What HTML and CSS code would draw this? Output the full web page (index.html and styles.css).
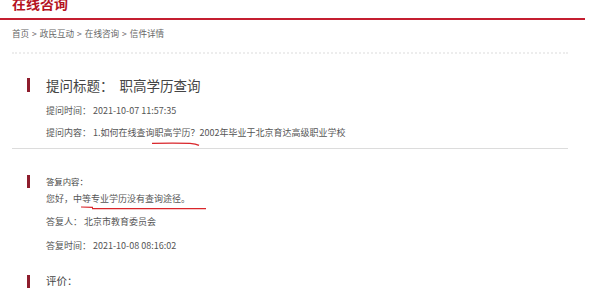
FILE: index.html
```html
<!DOCTYPE html>
<html>
<head>
	<meta charset="UTF-8">
	<title>在线咨询</title>
	<link rel="stylesheet" href="styles.css">
</head>
<body>
	<div class="top">
		<h1>在线咨询</h1>
	</div>
	<div class="crumb">首页 &gt; 政民互动 &gt; 在线咨询 &gt; 信件详情</div>
	<div class="dots"></div>

	<div class="ask">
		<div class="head big"><span class="bar"></span>提问标题：&nbsp;职高学历查询</div>
		<div class="line l-time">提问时间：&nbsp;2021-10-07 11:57:35</div>
		<div class="line l-text">提问内容：&nbsp;1.如何在线查询<span class="mark">职高学历？<svg class="pen pen-q" width="48" height="4" viewBox="0 0 48 4"><path d="M0 1.4 Q22 1 38 1.4 Q44 1.8 47 3.4" fill="none" stroke="#d9262b" stroke-width="1.3"/></svg></span>2002年毕业于北京育达高级职业学校</div>
	</div>

	<div class="answer">
		<div class="head small"><span class="bar short"></span>答复内容：</div>
		<div class="line l-reply">您好，<span class="mark">中等专业学历没有查询途径。<svg class="pen pen-a" width="126" height="4" viewBox="0 0 126 4"><path d="M0 1 L12 1.3" fill="none" stroke="#d9262b" stroke-width="1.2"/><path d="M11 2.6 L125 2.6" fill="none" stroke="#d9262b" stroke-width="1.4"/></svg></span></div>
		<div class="line l-who">答复人：&nbsp;北京市教育委员会</div>
		<div class="line l-when">答复时间：&nbsp;2021-10-08 08:16:02</div>
		<div class="head mid"><span class="bar short"></span>评价：</div>
	</div>
</body>
</html>
```
FILE: styles.css
```css
body {
	margin: 0;
	padding: 0;
	background: #fff;
	color: #333;
	font-family: "Noto Sans CJK SC", "Liberation Sans", sans-serif;
}
.top {
	width: 585px;
	height: 18px;
	border-bottom: 2px solid #c41e30;
	overflow: hidden;
}
.top h1 {
	margin: -4px 0 0 12px;
	font-size: 14px;
	line-height: 14px;
	font-weight: bold;
	color: #b5141f;
}
.crumb {
	margin: 6px 0 0 12px;
	font-size: 8.6px;
	line-height: 14px;
	color: #666;
	word-spacing: 1px;
}
.dots {
	margin: 12px 0 0 12px;
	width: 556px;
	border-top: 2px dotted #ededed;
}
.ask {
	width: 556px;
	margin-left: 12px;
	padding-top: 21px;
	padding-bottom: 7px;
	border-bottom: 1px solid #dcdcdc;
}
.head {
	display: flex;
	align-items: center;
	padding-left: 15px;
	color: #444;
}
.bar {
	width: 3px;
	height: 14px;
	margin-right: 16px;
	background: #8e1d2d;
}
.bar.short {
	height: 13px;
}
.big {
	font-size: 13.5px;
	line-height: 20px;
	word-spacing: 3px;
}
.small {
	font-size: 8.4px;
	line-height: 14px;
}
.mid {
	font-size: 10.5px;
	line-height: 14px;
	margin-top: 20px;
}
.line {
	padding-left: 34px;
	font-size: 9px;
	line-height: 16px;
	color: #555;
}
.l-time {
	margin-top: 8px;
}
.l-text {
	margin-top: 6px;
}
.mark {
	position: relative;
	display: inline-block;
}
.pen {
	position: absolute;
	top: 100%;
	display: block;
}
.pen-q {
	left: -3px;
	margin-top: 1px;
}
.pen-a {
	left: 8px;
	margin-top: 0;
}
.answer {
	margin-left: 12px;
	padding-top: 25px;
}
.l-reply {
	margin-top: 4px;
	line-height: 14px;
}
.l-who {
	margin-top: 8px;
}
.l-when {
	margin-top: 8px;
}
```
